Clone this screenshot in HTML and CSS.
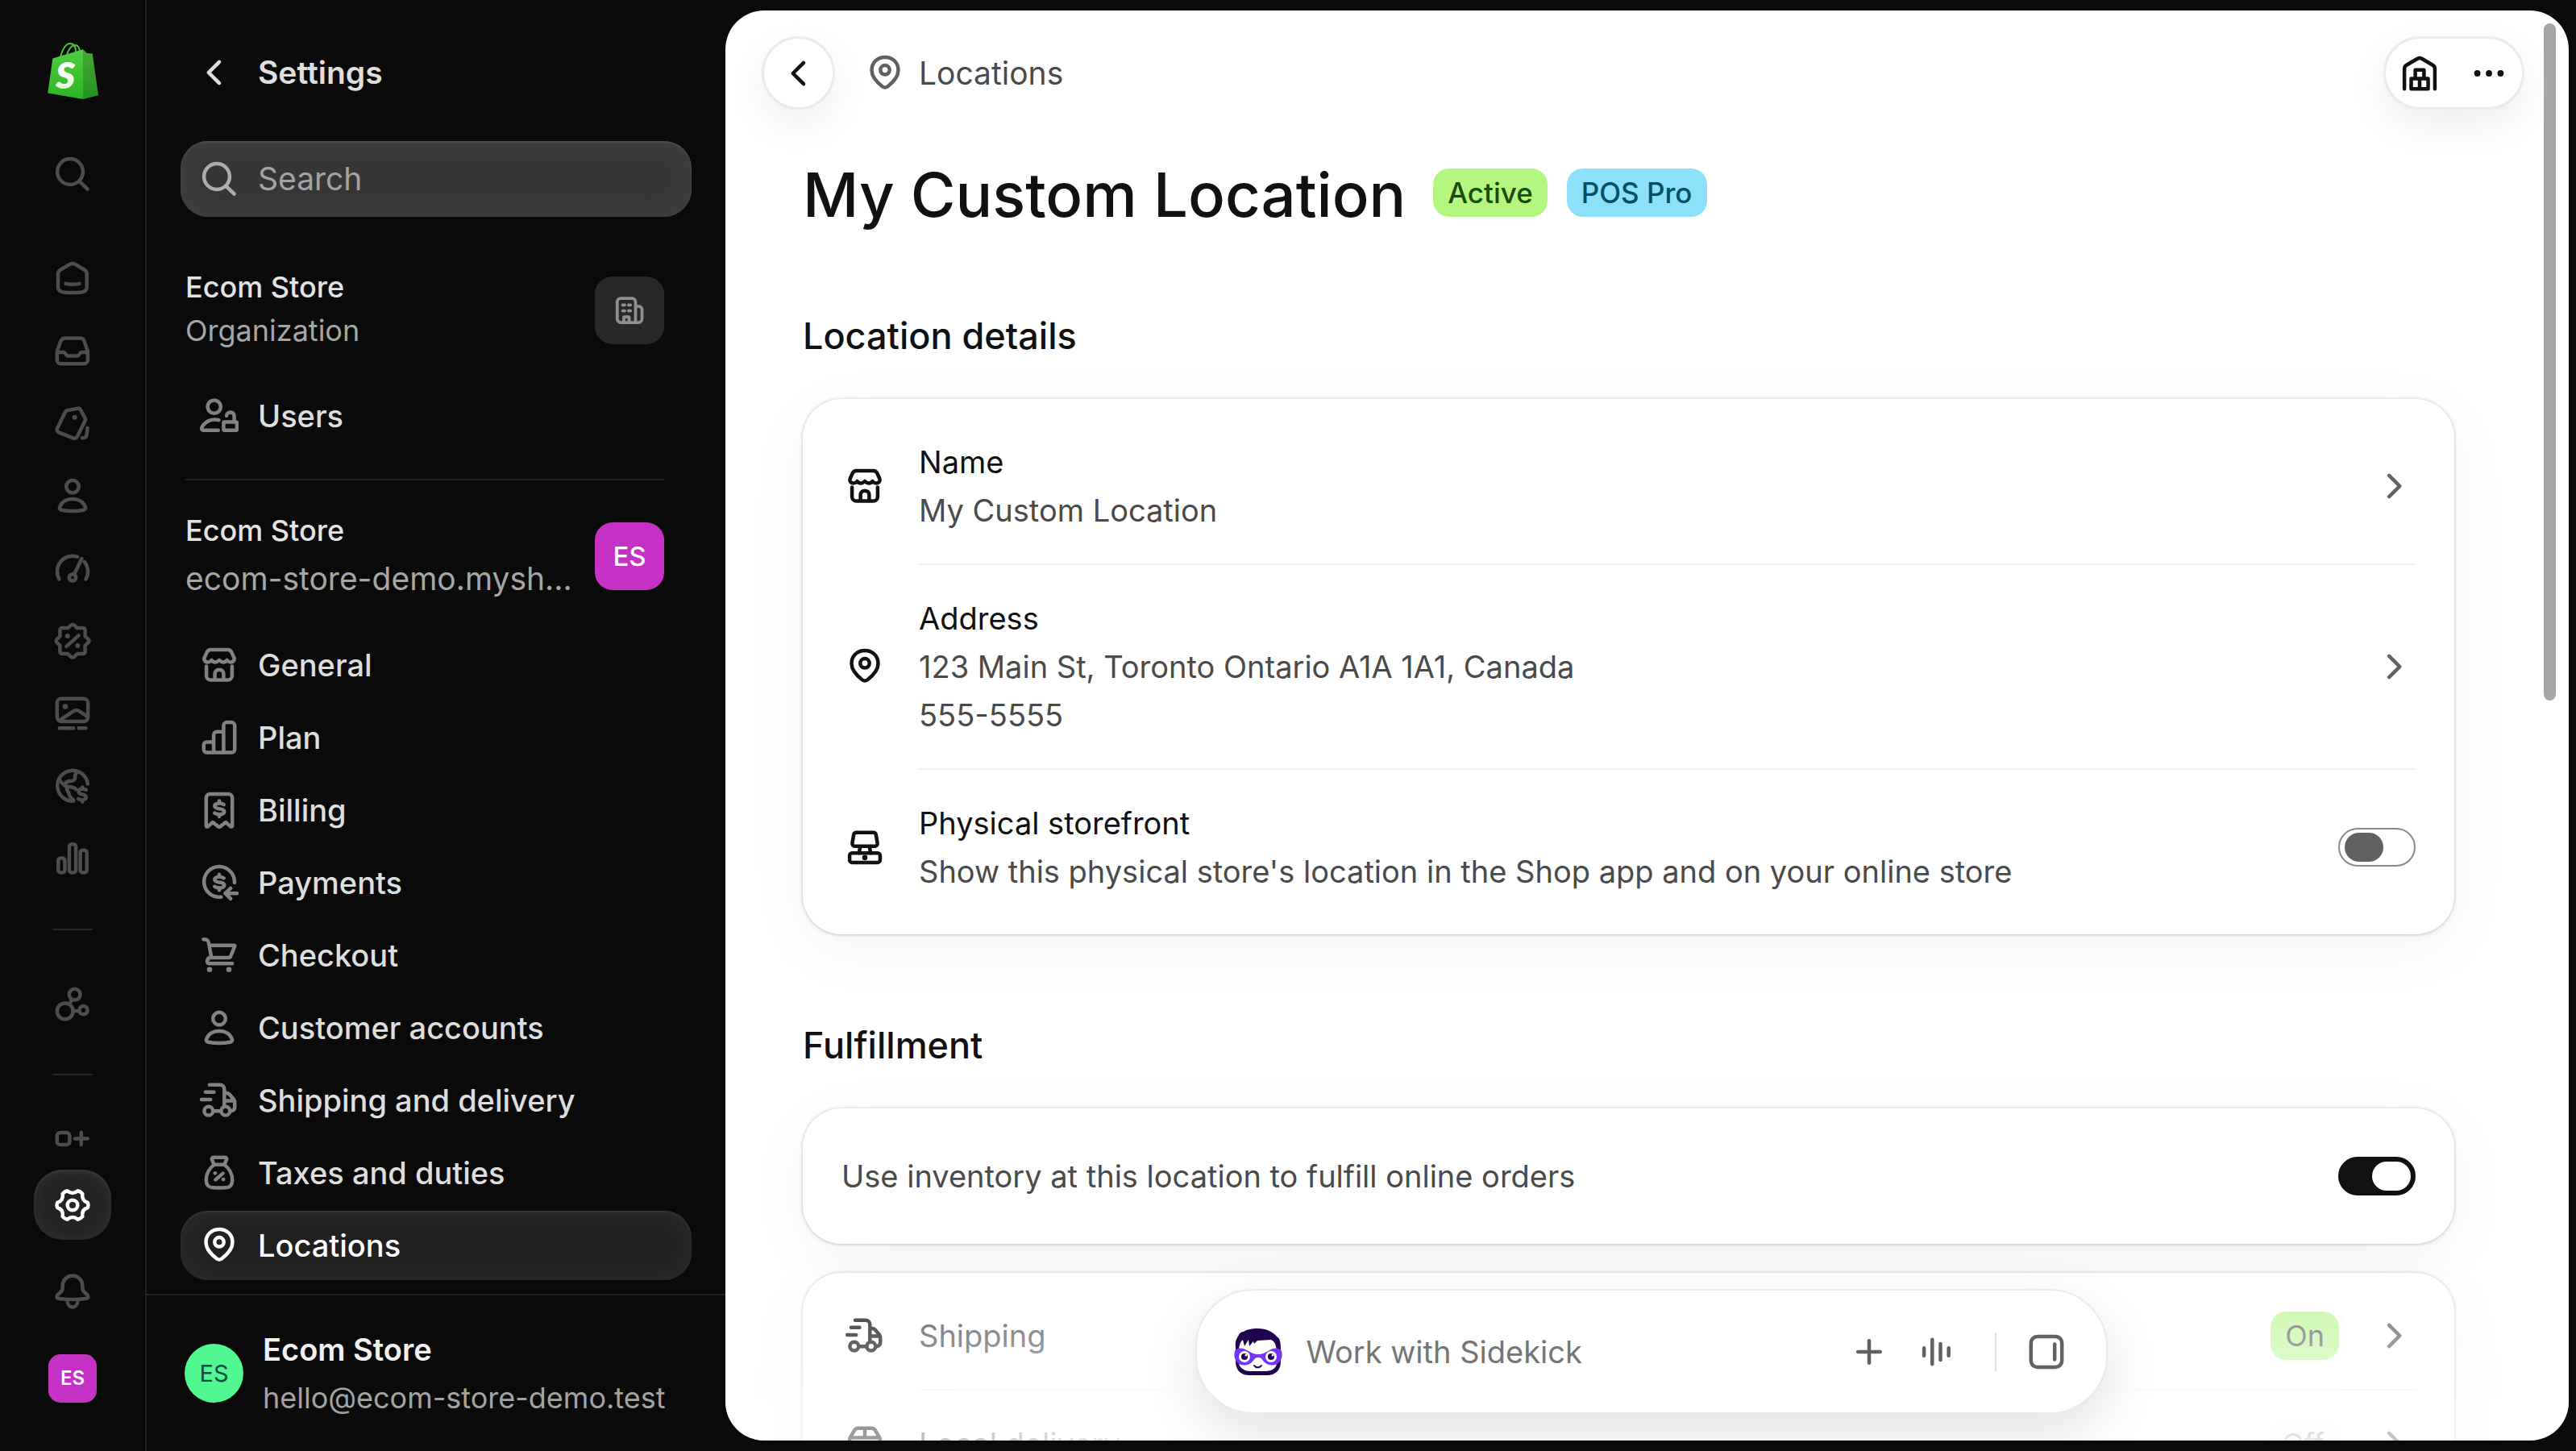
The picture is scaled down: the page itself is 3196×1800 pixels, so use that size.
FILE: index.html
```html
<!DOCTYPE html>
<html lang="en">
<head>
<meta charset="utf-8">
<title>Locations · Settings</title>
<link rel="stylesheet" href="styles.css">
</head>
<body>
<svg class="sprite" aria-hidden="true">
  <symbol id="i-search" viewBox="0 0 16 16"><circle cx="7" cy="7" r="5.3"/><path d="M11 11.1l3.2 3.1"/></symbol>
  <symbol id="i-home" viewBox="0 0 16 16"><path d="M2 6.4c0-.8.4-1.5 1.1-1.9l3.8-2.2c.7-.4 1.5-.4 2.2 0l3.7 2.2c.7.4 1.1 1.1 1.1 1.9v5.2c0 1.2-.8 2-2 2.2-2.6.3-5.3.3-7.9 0-1.2-.2-2-1-2-2.2z"/><path d="M5.2 10.3c1.9.4 3.7.4 5.6 0"/></symbol>
  <symbol id="i-inbox" viewBox="0 0 16 16"><path d="M4.8 2.8h6.4c.7 0 1.3.4 1.5 1l1.4 3.9c.2.5.2.8.2 1.2v2.9c0 .9-.7 1.6-1.6 1.6H3.2c-.9 0-1.6-.7-1.6-1.6V8.900c0-.4 0-.7.2-1.200l1.400-3.900c.3-.6.9-1 1.600-1z"/><path d="M1.700 8.700h2.600c.9 0 .8 1.500 1.800 1.500h3.800c1 0 .9-1.500 1.800-1.500h2.600"/></symbol>
  <symbol id="i-tag" viewBox="0 0 16 16"><path d="M5.800 2.700l4.100-.8c.7-.1 1.200.1 1.500.7l1.700 3.100c.3.500.3 1 0 1.500l-3.100 6.200c-.4.800-1 1-1.800.7l-5.700-2.200c-.9-.4-1.200-1.100-.7-2l3.100-6.400c.2-.4.500-.7.900-.8z"/><circle class="dot" cx="8.900" cy="5.600" r="1"/><path d="M14.200 10l-.3 2.500c-.1 1-.7 1.600-1.600 1.600H12"/></symbol>
  <symbol id="i-person" viewBox="0 0 16 16"><circle cx="8" cy="4.200" r="2.600"/><path d="M2.700 12.700C3.400 10.600 5.400 9.300 8 9.300s4.600 1.300 5.300 3.400c.2.600-.1 1.100-.7 1.200-3 .6-6.200.6-9.200 0-.6-.1-.9-.6-.7-1.200z"/></symbol>
  <symbol id="i-gauge" viewBox="0 0 16 16"><path d="M2.500 12.500A6.400 6.400 0 0 1 10 3.200M12.900 5.300a6.400 6.400 0 0 1 .6 7.200M8.700 10.500L11.800 4"/><circle cx="8" cy="11.800" r="1.400"/></symbol>
  <symbol id="i-discount" viewBox="0 0 16 16"><path d="M7.200 1.600c.5-.4 1.100-.4 1.600 0l1.100 1.100h2.300c.6 0 1 .4 1 1v2.400l1.200 1.100c.5.500.5 1.100 0 1.600l-1.200 1.100v2.400c0 .6-.4 1-1 1H9.900l-1.100 1.200c-.5.4-1.100.4-1.600 0l-1.100-1.200H3.800c-.6 0-1-.4-1-1V9.900L1.600 8.800c-.5-.5-.5-1.100 0-1.600l1.200-1.100V3.700c0-.6.4-1 1-1h2.300z"/><path d="M5.500 10.300l5-4.500"/><circle class="dot" cx="5.900" cy="6" r="1"/><circle class="dot" cx="10.100" cy="10" r="1"/></symbol>
  <symbol id="i-image" viewBox="0 0 16 16"><rect x="1.600" y="1.900" width="12.800" height="9.400" rx="1.800"/><path d="M2.800 10.800l5.500-3.700c.9-.6 1.700-.6 2.600 0l3.300 2.300M2.600 14.100h5.800M10.600 14.100h2.900"/><circle class="dot" cx="5" cy="5.200" r="1.100"/></symbol>
  <symbol id="i-globe" viewBox="0 0 16 16"><path d="M8.400 14.200A6.300 6.300 0 1 1 14.300 7.200M2.200 5.200l2.600 2.700c.1-1.500 1-2 2.600-2 1.100 0 1.700-.5 1.600-1.400-.1-1 .1-1.600.9-2.200M4.800 7.900c1.700.8 4 .3 4.600 1.500M5.600 8.600c-.2 1.200.8 1.600.9 2.700.1.900.9 1.700 1.900 2.600"/><path d="M13.600 9.600c-1.400-.8-3.200-.4-3.100.8.1 1.500 3.100.7 3.100 2.200 0 1.200-1.900 1.500-3.200.7M12.100 8.500v.8M12.100 13.800v.8"/></symbol>
  <symbol id="i-bars" viewBox="0 0 16 16"><rect x="2.100" y="7.800" width="2.700" height="6" rx="1"/><rect x="6.650" y="2.100" width="2.700" height="11.700" rx="1"/><rect x="11.200" y="4.600" width="2.700" height="9.200" rx="1"/></symbol>
  <symbol id="i-apps" viewBox="0 0 16 16"><circle cx="4.900" cy="10.800" r="3.300"/><circle cx="8.900" cy="3.900" r="2.300"/><circle cx="12.500" cy="10.400" r="1.700"/><path d="M6.700 7.900l1-1.900M8.300 10.700h2.400"/></symbol>
  <symbol id="i-gridplus" viewBox="0 0 16 16"><rect x="1.600" y="1.700" width="5.200" height="5" rx="1.300"/><rect x="1.600" y="9.500" width="5.200" height="5" rx="1.300"/><rect x="9.200" y="9.500" width="5.200" height="5" rx="1.300"/><path d="M9 4.200h5.200M11.600 1.700v5"/></symbol>
  <symbol id="i-gear" viewBox="0 0 16 16"><path d="M14.300 7Q14.700 8 14.300 9Q11.700 9.800 12.100 12.700Q11.300 13.700 10.200 13.900Q8 12.100 5.800 13.900Q4.700 13.700 3.900 12.700Q4.300 9.800 1.700 9Q1.300 8 1.700 7Q4.300 6.200 3.900 3.300Q4.700 2.300 5.800 2.100Q8 3.900 10.200 2.100Q11.300 2.300 12.100 3.300Q11.700 6.200 14.300 7z"/><circle cx="8" cy="8" r="2.100"/></symbol>
  <symbol id="i-bell" viewBox="0 0 16 16"><path d="M8 1.500a4.100 4.100 0 0 0-4.100 4.100v.9c0 1-.5 1.700-1.300 2.300C1.300 9.700 1.200 10.900 2.400 11c3.700.4 7.500.4 11.200 0 1.200-.1 1.100-1.300-.2-2.200-.8-.6-1.300-1.300-1.300-2.300v-.9A4.100 4.100 0 0 0 8 1.500z"/><path d="M5.800 11.600c0 3.900 4.400 3.900 4.400 0"/></symbol>
  <symbol id="i-back" viewBox="0 0 16 16"><path d="M10 3.600L5.600 8l4.400 4.400"/></symbol>
  <symbol id="i-next" viewBox="0 0 16 16"><path d="M5.700 3.600L10.100 8l-4.400 4.400"/></symbol>
  <symbol id="i-users" viewBox="0 0 16 16"><circle cx="5.900" cy="4.200" r="2.700"/><path d="M7.800 9.700C4.800 9 2 10.300.8 12.800c-.3.600.1 1.100.7 1.100h6.100"/><rect x="9.800" y="10.500" width="5.500" height="3.400" rx=".3"/><path d="M14.200 10.300V8.100c0-2.100-3-2.100-3.200-.2"/></symbol>
  <symbol id="i-store" viewBox="0 0 16 16"><path d="M4.500 1.700h7c.7 0 1.300.4 1.600 1l1 2.200c.4 1-.3 1.900-1.300 1.900-.8 0-1.300-.4-1.600-.8-.4.500-.9.800-1.600.800S8.500 6.500 8 6c-.5.500-.9.800-1.600.800S5.200 6.500 4.800 6c-.3.400-.8.800-1.600.8-1 0-1.700-.9-1.300-1.900l1-2.200c.3-.6.900-1 1.600-1zM2.700 8.500v3.900c0 1 .8 1.800 1.800 1.800h7c1 0 1.800-.8 1.800-1.800V8.500M6.200 14v-2.300c0-2.400 3.600-2.400 3.600 0V14"/></symbol>
  <symbol id="i-plan" viewBox="0 0 16 16"><path d="M9.800 14.200V3c0-.7.600-1.300 1.300-1.300h2c.7 0 1.300.6 1.300 1.300v9.900c0 .7-.6 1.300-1.300 1.300H2.900c-.7 0-1.300-.6-1.300-1.300V11c0-.7.600-1.200 1.300-1.200h2.700M5.700 14.200V6.900c0-.7.600-1.300 1.300-1.300h2.700"/></symbol>
  <symbol id="i-bill" viewBox="0 0 16 16"><path d="M2.600 14.400V2.900c0-.9.700-1.600 1.600-1.600h7.600c.9 0 1.600.7 1.600 1.600v11.500c0 .5-.4.600-.8.300l-1.900-1.700-2 1.600c-.4.400-1 .4-1.400 0l-2-1.600-1.900 1.700c-.4.300-.8.200-.8-.3z"/><path d="M9.900 5.700c-1.400-.9-3.900-.6-3.800.7.100 1.500 4 .6 4 2.200 0 1.300-2.600 1.500-4 .6M8 4.200v1M8 9.700v1"/></symbol>
  <symbol id="i-pay" viewBox="0 0 16 16"><path d="M8.800 13.900A6.300 6.300 0 1 1 14.300 8M15.300 12.400h-4.600M12.700 10.300l-2.200 2.100 2.200 2.200"/><path d="M9.900 6.100c-1.400-.9-3.900-.6-3.800.7.100 1.500 4 .6 4 2.200 0 1.300-2.600 1.500-4 .6M8 4.600v1M8 10.100v1"/></symbol>
  <symbol id="i-cart" viewBox="0 0 16 16"><path d="M1.500 1.400c1.400 0 1.900.3 2.100 1.300L4.800 9M3.900 3.900h10.300c.2 0 .3.200.2.400L12.700 8.500c-.1.300-.4.500-.8.500H4.300c-1.300 0-1.800 2.400-.6 2.400h9.700"/><circle class="dot" cx="4" cy="13.900" r="1.100"/><circle class="dot" cx="12" cy="13.900" r="1.100"/></symbol>
  <symbol id="i-truck" viewBox="0 0 16 16"><path d="M4 1.600h4.300c1 0 1.800.8 1.800 1.800v7.200M2.300 4.600h3.500M.7 7.700h3.700M5.500 12.400h3M10.200 5h.9c.5 0 .9.200 1.200.6l1.700 2c.3.400.4.700.4 1.100v2.200c0 .8-.6 1.400-1.600 1.500M10.200 8.200h3.900"/><circle cx="3.600" cy="12.400" r="1.800"/><circle cx="10.600" cy="12.400" r="1.800"/></symbol>
  <symbol id="i-bag" viewBox="0 0 16 16"><path d="M5.900 4.600L5 2.500c-.2-.5.100-.9.600-.9h4.800c.5 0 .8.400.6.900l-.9 2.100M5.900 4.600h4.200c2 1.500 3.300 4 3.300 6.300 0 2.300-1 3.100-2.900 3.200-1.700.1-3.300.1-5 0-1.900-.1-2.900-.9-2.900-3.200 0-2.300 1.300-4.800 3.300-6.300zM6.500 10.800l3-2.600"/><circle class="dot" cx="6.300" cy="8.100" r=".8"/><circle class="dot" cx="9.700" cy="10.700" r=".8"/></symbol>
  <symbol id="i-pin" viewBox="0 0 16 16"><path d="M8 1.300c-3.200 0-5.500 2.300-5.500 5.400 0 3.200 2.500 5.300 4.500 6.800.6.400 1.400.4 2 0 2-1.500 4.500-3.600 4.500-6.800C13.500 3.600 11.200 1.300 8 1.300z"/><circle cx="8" cy="6.600" r="1.900"/></symbol>
  <symbol id="i-org" viewBox="0 0 16 16"><path d="M1.900 12.200V3.800c0-1 .8-1.800 1.800-1.800h5.500c1 0 1.800.8 1.800 1.800V14H3.700c-1 0-1.800-.8-1.800-1.800zM11 5.900h1.400c1 0 1.800.8 1.800 1.800v4.500c0 1-.8 1.800-1.800 1.800H11M5.200 14v-2.800h2.600V14M4.600 5.300h1M7.500 5.300h1M4.600 8.200h1M7.500 8.200h1"/></symbol>
  <symbol id="i-warehouse" viewBox="0 0 16 16"><path d="M1.700 14.400V6.100c0-.7.400-1.300 1-1.600l4.400-2.600c.6-.3 1.200-.3 1.800 0l4.400 2.600c.6.300 1 .9 1 1.600v8.300M4.500 10.200h3.500v4.200H4.500zM8 10.200h3.500v4.200H8zM6.200 6.600h3.600v3.600H6.200z"/></symbol>
  <symbol id="i-more" viewBox="0 0 16 16"><circle class="dot" cx="3.200" cy="8" r="1.300"/><circle class="dot" cx="8" cy="8" r="1.300"/><circle class="dot" cx="12.800" cy="8" r="1.300"/></symbol>
  <symbol id="i-register" viewBox="0 0 16 16"><path d="M4.500 1.900h7c.6 0 1 .4 1.100.9l.6 3.500c.1.700-.4 1.300-1.100 1.300H3.900c-.7 0-1.200-.6-1.100-1.300l.6-3.500c.1-.5.500-.9 1.100-.9zM6.100 7.800l-.5 2.600M9.900 7.800l.5 2.600"/><rect x="1.700" y="10.400" width="12.600" height="3.900" rx="1"/><circle class="dot" cx="8" cy="12.300" r="1.100"/></symbol>
  <symbol id="i-box" viewBox="0 0 16 16"><path d="M1.700 13V6.500c0-.4.100-.8.300-1.200l1.800-3c.3-.4.700-.7 1.200-.7h6c.5 0 .9.300 1.200.7l1.800 3c.2.400.3.800.3 1.200V13c0 .8-.6 1.400-1.400 1.400H3.100c-.8 0-1.400-.6-1.400-1.400zM2 5.500h12M8 1.600v4"/></symbol>
  <symbol id="i-plus" viewBox="0 0 16 16"><path d="M8 3.400v9.200M3.400 8h9.200"/></symbol>
  <symbol id="i-wave" viewBox="0 0 16 16"><path d="M2.700 6.400v3.200M6.100 2.900v10.200M9.500 4.700v6.600M12.900 6.400v3.200"/></symbol>
  <symbol id="i-panel" viewBox="0 0 16 16"><rect x="1.600" y="1.700" width="12.800" height="12.600" rx="2.600"/><path d="M11.400 4.800v6.400"/></symbol>
</svg>

<div class="app">
  <nav class="rail" aria-label="Main">
    <a class="logo" href="#" aria-label="Shopify home">
      <svg viewBox="0 0 63 70" width="63" height="70">
        <defs><linearGradient id="g1" x1="0" y1="0" x2="0" y2="1"><stop offset="0" stop-color="#50cf40"/><stop offset="1" stop-color="#2eb325"/></linearGradient>
        <linearGradient id="g2" x1="0" y1="0" x2="0" y2="1"><stop offset="0" stop-color="#45a836"/><stop offset="1" stop-color="#259220"/></linearGradient>
        <linearGradient id="g3" x1="0" y1="0" x2="0" y2="1"><stop offset=".4" stop-color="#fff"/><stop offset="1" stop-color="#d3f0c0"/></linearGradient></defs>
        <path d="M16 18C18 8 23 1 28 1s7 5 7 11M24 16c1-7 6-13 10-13s5 3 6 7" fill="none" stroke="#4dc63d" stroke-width="2"/>
        <path d="M6.300 19.400L44 8.300V70L.3 62.500z" fill="url(#g1)"/><path d="M44 8.300l5 4.700 6.700.4L63 65.200 44 70z" fill="url(#g2)"/>
        <text class="logo-letter" x="10" y="57" fill="url(#g3)">S</text>
      </svg>
    </a>
    <button class="rail-item rail-search" aria-label="Search"><svg class="icon"><use href="#i-search"/></svg></button>
    <div class="rail-list">
      <a class="rail-item" href="#" aria-label="Home"><svg class="icon"><use href="#i-home"/></svg></a>
      <a class="rail-item" href="#" aria-label="Orders"><svg class="icon"><use href="#i-inbox"/></svg></a>
      <a class="rail-item" href="#" aria-label="Products"><svg class="icon"><use href="#i-tag"/></svg></a>
      <a class="rail-item" href="#" aria-label="Customers"><svg class="icon"><use href="#i-person"/></svg></a>
      <a class="rail-item" href="#" aria-label="Growth"><svg class="icon"><use href="#i-gauge"/></svg></a>
      <a class="rail-item" href="#" aria-label="Discounts"><svg class="icon"><use href="#i-discount"/></svg></a>
      <a class="rail-item" href="#" aria-label="Content"><svg class="icon"><use href="#i-image"/></svg></a>
      <a class="rail-item" href="#" aria-label="Markets"><svg class="icon"><use href="#i-globe"/></svg></a>
      <a class="rail-item" href="#" aria-label="Analytics"><svg class="icon"><use href="#i-bars"/></svg></a>
      <hr class="rail-rule">
      <a class="rail-item" href="#" aria-label="Sales channels"><svg class="icon"><use href="#i-apps"/></svg></a>
      <hr class="rail-rule">
      <a class="rail-item" href="#" aria-label="Apps"><svg class="icon"><use href="#i-gridplus"/></svg></a>
    </div>
    <div class="rail-foot">
      <a class="rail-item rail-current" href="#" aria-label="Settings"><svg class="icon"><use href="#i-gear"/></svg></a>
      <button class="rail-item rail-bell" aria-label="Notifications"><svg class="icon"><use href="#i-bell"/></svg></button>
      <button class="tile tile-small" aria-label="Account">ES</button>
    </div>
  </nav>

  <aside class="settings">
    <div class="settings-scroll">
      <header class="settings-head"><a href="#" aria-label="Back"><svg class="icon"><use href="#i-back"/></svg></a><h2>Settings</h2></header>
      <label class="search"><svg class="icon"><use href="#i-search"/></svg><input type="search" placeholder="Search" aria-label="Search"></label>
      <div class="entity">
        <div class="entity-text"><strong>Ecom Store</strong><span>Organization</span></div>
        <button class="tile tile-org" aria-label="Organization"><svg class="icon icon-org"><use href="#i-org"/></svg></button>
      </div>
      <a class="nav-item" href="#"><svg class="icon"><use href="#i-users"/></svg>Users</a>
      <hr class="settings-rule">
      <div class="entity entity-store">
        <div class="entity-text"><strong>Ecom Store</strong><span class="domain">ecom-store-demo.mysh...</span></div>
        <span class="tile">ES</span>
      </div>
      <nav class="nav" aria-label="Settings">
        <a class="nav-item" href="#"><svg class="icon"><use href="#i-store"/></svg>General</a>
        <a class="nav-item" href="#"><svg class="icon"><use href="#i-plan"/></svg>Plan</a>
        <a class="nav-item" href="#"><svg class="icon"><use href="#i-bill"/></svg>Billing</a>
        <a class="nav-item" href="#"><svg class="icon"><use href="#i-pay"/></svg>Payments</a>
        <a class="nav-item" href="#"><svg class="icon"><use href="#i-cart"/></svg>Checkout</a>
        <a class="nav-item" href="#"><svg class="icon"><use href="#i-person"/></svg>Customer accounts</a>
        <a class="nav-item" href="#"><svg class="icon"><use href="#i-truck"/></svg>Shipping and delivery</a>
        <a class="nav-item" href="#"><svg class="icon"><use href="#i-bag"/></svg>Taxes and duties</a>
        <a class="nav-item nav-current" href="#" aria-current="page"><svg class="icon"><use href="#i-pin"/></svg>Locations</a>
      </nav>
    </div>
    <a class="account" href="#">
      <span class="avatar">ES</span>
      <span class="account-text"><strong>Ecom Store</strong><span>hello@ecom-store-demo.test</span></span>
    </a>
  </aside>

  <main class="page">
    <header class="topbar">
      <button class="round" aria-label="Back"><svg class="icon"><use href="#i-back"/></svg></button>
      <a class="crumb" href="#"><svg class="icon"><use href="#i-pin"/></svg>Locations</a>
      <div class="actions">
        <button aria-label="Change location"><svg class="icon"><use href="#i-warehouse"/></svg></button>
        <button aria-label="More actions"><svg class="icon"><use href="#i-more"/></svg></button>
      </div>
    </header>
    <div class="content">
      <div class="title-row">
        <h1>My Custom Location</h1>
        <span class="badge badge-green">Active</span>
        <span class="badge badge-blue">POS Pro</span>
      </div>

      <section>
        <h2 class="section-title">Location details</h2>
        <div class="card">
          <a class="row" href="#">
            <svg class="icon lead"><use href="#i-store"/></svg>
            <span class="row-body"><span class="row-title">Name</span><span>My Custom Location</span></span>
            <svg class="icon chevron"><use href="#i-next"/></svg>
          </a>
          <hr class="row-rule">
          <a class="row" href="#">
            <svg class="icon lead"><use href="#i-pin"/></svg>
            <span class="row-body"><span class="row-title">Address</span><span>123 Main St, Toronto Ontario A1A 1A1, Canada</span><span>555-5555</span></span>
            <svg class="icon chevron"><use href="#i-next"/></svg>
          </a>
          <hr class="row-rule">
          <label class="row">
            <svg class="icon lead"><use href="#i-register"/></svg>
            <span class="row-body"><span class="row-title">Physical storefront</span><span>Show this physical store's location in the Shop app and on your online store</span></span>
            <input class="switch" type="checkbox" role="switch">
          </label>
        </div>
      </section>

      <section>
        <h2 class="section-title">Fulfillment</h2>
        <div class="card">
          <label class="row row-single"><span class="row-body">Use inventory at this location to fulfill online orders</span><input class="switch" type="checkbox" role="switch" checked></label>
        </div>
        <div class="card">
          <a class="row" href="#">
            <svg class="icon lead"><use href="#i-truck"/></svg>
            <span class="row-body">Shipping</span>
            <span class="badge badge-green badge-on">On</span>
            <svg class="icon chevron"><use href="#i-next"/></svg>
          </a>
          <hr class="row-rule">
          <a class="row" href="#">
            <svg class="icon lead"><use href="#i-box"/></svg>
            <span class="row-body">Local delivery</span>
            <span class="badge badge-off">Off</span>
            <svg class="icon chevron"><use href="#i-next"/></svg>
          </a>
        </div>
      </section>
    </div>

    <div class="fade"></div>
    <div class="fade fade-center"></div>
    <div class="sidekick-dock">
      <form class="sidekick">
        <svg class="face" viewBox="0 0 60 58" width="60" height="58">
          <path d="M2 24C1 14 4 12 6 8c1-2 3-4 6-4C16 1 23 0 29 0c11 0 19 4 24 10 4 2 5 7 5 16v15c0 11-7 17-17 17H19C9 58 2 52 2 41z" fill="#1f0250"/>
          <path d="M6 27c0-4 1-8 3-11l2-2 2 8 5-8 1 8 5-6 1 3 4-4 17-1c5 2 6 7 7 13v16c0 6-6 10-14 10H20C12 53 6 48 6 42z" fill="#fff"/>
          <path d="M1 28c2-4 9-5 15-1 5 3 9 5 14 5s9-2 14-5c6-4 13-3 15 1 1 4 1 9-2 13-4 6-15 6-20 0-3-4-4-5-7-5s-4 1-7 5c-5 6-16 6-20 0-3-4-3-9-2-13z" fill="#7434fa"/>
          <circle cx="13" cy="35" r="7" fill="#fff"/><circle cx="46" cy="35" r="7" fill="#fff"/>
          <circle cx="13" cy="35" r="4" fill="#1f0250"/><circle cx="46" cy="35" r="4" fill="#1f0250"/><circle cx="15" cy="33" r="1.500" fill="#fff"/><circle cx="48" cy="33" r="1.500" fill="#fff"/>
          <path d="M25 46c2 3 7 3 9 0" fill="none" stroke="#1f0250" stroke-width="2" stroke-linecap="round"/>
        </svg>
        <input type="text" placeholder="Work with Sidekick" aria-label="Work with Sidekick">
        <button type="button" aria-label="Add"><svg class="icon"><use href="#i-plus"/></svg></button>
        <button type="button" aria-label="Voice"><svg class="icon"><use href="#i-wave"/></svg></button>
        <span class="sidekick-rule"></span>
        <button type="button" aria-label="Open panel"><svg class="icon"><use href="#i-panel"/></svg></button>
      </form>
    </div>
    <div class="scroll-thumb"></div>
  </main>
</div>
</body>
</html>
```
FILE: styles.css
```css
*, *::before, *::after { box-sizing: border-box; }

body {
  margin: 0;
  background: #0a0a0a;
  color: #dedede;
  font-family: Inter, "Liberation Sans", sans-serif;
  font-size: 38px;
  font-weight: 400;
  line-height: 60px;
}

h1, h2, hr { margin: 0; }
hr { border: 0; flex: none; }
a { color: inherit; text-decoration: none; }
button { margin: 0; padding: 0; border: 0; background: none; color: inherit; font: inherit; cursor: pointer; }
input { font: inherit; }

.sprite { position: absolute; width: 0; height: 0; }
.icon {
  width: 48px;
  height: 48px;
  flex: none;
  display: block;
  fill: none;
  stroke: currentColor;
  stroke-width: 1.5px;
  stroke-linecap: round;
  stroke-linejoin: round;
}
.dot { fill: currentColor; stroke: none; }

.app { display: flex; height: 100vh; overflow: hidden; }

/* Icon rail */
.rail {
  flex: none;
  width: 182px;
  display: flex;
  flex-direction: column;
  align-items: center;
  padding: 53px 0 60px;
  border-right: 2px solid #212121;
  color: #4d4d4d;
}
.logo { display: block; height: 70px; }
.logo svg { display: block; }
.logo-letter { font: italic 800 46px Lato, "Open Sans", sans-serif; }
.rail-item { display: flex; flex: none; align-items: center; justify-content: center; width: 96px; height: 90px; }
.rail-search { margin: 48px 0 39px; }
.rail-list { flex: 1; min-height: 0; overflow: hidden; display: flex; flex-direction: column; align-items: center; }
.rail-rule { width: 50px; height: 2px; margin: 42px 0 47px; background: #262626; }
.rail-rule ~ .rail-rule { margin: 41px 0 45px; }
.rail-foot { display: flex; flex-direction: column; align-items: center; padding-top: 25px; }
.rail-current {
  height: 87px;
  border-radius: 36px;
  background: #232323;
  color: #fff;
  box-shadow: inset 0 0 24px #323232, inset 0 3px 3px #3a3a3a;
}
.rail-bell { margin: 19px 0 33px; }

.tile {
  display: flex;
  flex: none;
  align-items: center;
  justify-content: center;
  width: 86px;
  height: 84px;
  border-radius: 22px;
  background: #c530c5;
  color: #fff;
  font-size: 33px;
  font-weight: 500;
}
.tile-small { width: 60px; height: 60px; border-radius: 15px; font-size: 24px; font-weight: 600; }
.tile-org { background: #282828; color: #8f8f8f; }
.icon-org { width: 40px; height: 40px; }

/* Settings navigation */
.settings { flex: none; width: 718px; display: flex; flex-direction: column; }
.settings-scroll { flex: 1; min-height: 0; overflow: hidden; padding: 60px 42px 0; }
.settings-head { display: flex; align-items: center; gap: 30px; height: 60px; padding-left: 18px; }
.settings-head h2 { font-size: 39px; line-height: 60px; font-weight: 600; }
.search {
  display: flex;
  align-items: center;
  gap: 24px;
  height: 94px;
  margin-top: 55px;
  padding: 0 24px;
  border-radius: 34px;
  background: #363636;
  color: #acacac;
  box-shadow: inset 0 0 36px #434343, inset 0 2px 2px #545454;
}
.search input { flex: 1; min-width: 0; padding: 0; border: 0; outline: 0; background: none; color: #fff; font-size: 39px; }
.search input::placeholder { color: #a3a3a3; opacity: 1; }
.entity { display: flex; align-items: center; gap: 24px; margin-top: 60px; padding: 0 34px 0 6px; font-size: 36px; line-height: 54px; }
.entity-text { flex: 1; min-width: 0; display: flex; flex-direction: column; margin-bottom: 4px; color: #a6a6a6; white-space: nowrap; }
.entity-text strong { color: #e3e3e3; font-weight: 500; }
.entity-store { margin-top: 32px; line-height: 60px; }
.domain { font-size: 39px; }
.nav-item {
  display: flex;
  align-items: center;
  gap: 24px;
  height: 86px;
  padding: 0 24px;
  border-radius: 34px;
  color: #dedede;
  font-weight: 500;
}
.nav-item .icon { color: #828282; }
.entity + .nav-item { margin-top: 32px; }
.settings-rule { height: 2px; margin: 35px 34px 0 6px; background: #212121; }
.nav { display: flex; flex-direction: column; gap: 4px; margin-top: 30px; }
.nav-current { background: #212121; color: #fff; box-shadow: inset 0 0 36px #2e2e2e, inset 0 2px 2px #3a3a3a; }
.nav-current .icon { color: #fff; }
.account { flex: none; display: flex; align-items: center; gap: 24px; height: 195px; padding-left: 47px; border-top: 2px solid #212121; }
.avatar {
  display: flex;
  flex: none;
  align-items: center;
  justify-content: center;
  width: 73px;
  height: 73px;
  border-radius: 50%;
  background: #51f78f;
  color: #0a4d47;
  font-size: 29px;
}
.account-text { display: flex; flex-direction: column; color: #a3a3a3; font-size: 36px; }
.account-text strong { color: #f0f0f0; font-size: 38px; font-weight: 600; }

/* Page */
.page {
  position: relative;
  flex: 1;
  min-width: 0;
  margin: 13px 9px 13px 0;
  border-radius: 48px;
  background: #fff;
  color: #4a4a4a;
  overflow: hidden;
}
.topbar { display: flex; align-items: center; padding: 32px 55px 0 45px; }
.round, .actions { height: 91px; border: 3px solid #ebebeb; border-radius: 46px; background: #fff; color: #111; box-shadow: 0 18px 54px rgba(0, 0, 0, .08); }
.round { display: flex; align-items: center; justify-content: center; width: 91px; }
.crumb { display: flex; align-items: center; gap: 18px; margin-left: 38px; font-size: 39px; }
.crumb .icon { color: #616161; }
.actions { display: flex; align-items: center; gap: 38px; margin-left: auto; padding: 0 17px 0 18px; }

.content { padding: 57px 142px 0 96px; }
.title-row { display: flex; align-items: center; gap: 24px; }
.title-row h1 { margin-right: 10px; color: #111; font-size: 76px; line-height: 96px; font-weight: 500; }
.badge { flex: none; height: 60px; padding: 0 18px; border-radius: 20px; font-size: 35px; line-height: 60px; font-weight: 500; }
.title-row .badge { margin-bottom: 4px; }
.badge-green { background: #b4f780; color: #1b4a0c; }
.badge-blue { background: #8de0f9; color: #00506a; }
.badge-on { background: #c0f89a; color: #616161; font-size: 36px; font-weight: 400; }
.badge-off { background: #fafafa; color: #9a9a9a; font-size: 36px; font-weight: 400; }

section { margin-top: 98px; }
section + section { margin-top: 108px; }
.section-title { margin-bottom: 48px; color: #111; font-size: 45px; line-height: 60px; font-weight: 500; }
.card {
  padding: 12px 48px;
  border-radius: 48px;
  background: #fff;
  box-shadow: 0 0 4px rgba(0, 0, 0, .2), 0 2px 4px rgba(0, 0, 0, .06), 0 18px 84px rgba(0, 0, 0, .05);
}
.card + .card { margin-top: 36px; }
.row { display: flex; align-items: center; padding: 36px 0; }
.row-body { flex: 1; display: flex; flex-direction: column; }
.row-title, .lead { color: #111; }
.lead { margin: 0 43px 0 5px; }
.chevron { margin: 0 2px 0 45px; color: #616161; }
.row-single { padding: 42px 0; }
.row-rule { height: 2px; margin-left: 96px; background: #f3f3f3; }

.switch {
  appearance: none;
  flex: none;
  display: flex;
  align-items: center;
  width: 96px;
  height: 48px;
  margin: 0;
  padding: 0 6px;
  border: 2px solid #8a8a8a;
  border-radius: 24px;
  background: #fff;
}
.switch::before { content: ""; width: 48px; height: 36px; border-radius: 18px; background: #616161; }
.switch:checked { justify-content: flex-end; padding: 0 4px; border-color: #111; background: #111; }
.switch:checked::before { background: #fff; }

/* Veil behind the assistant bar */
.fade {
  position: absolute;
  inset: auto 0 0;
  height: 230px;
  pointer-events: none;
  background: linear-gradient(rgba(255, 255, 255, 0), rgba(255, 255, 255, .28) 35%, rgba(255, 255, 255, .6));
}
.fade-center {
  left: 180px;
  right: 180px;
  height: 170px;
  background: linear-gradient(rgba(255, 255, 255, 0), rgba(255, 255, 255, .3) 40%, rgba(255, 255, 255, .8) 90%);
  -webkit-mask-image: linear-gradient(90deg, transparent, #000 20%, #000 80%, transparent);
  mask-image: linear-gradient(90deg, transparent, #000 20%, #000 80%, transparent);
}
.sidekick-dock { position: absolute; inset: auto 0 33px 10px; display: flex; justify-content: center; pointer-events: none; }
.sidekick {
  display: flex;
  align-items: center;
  width: 1132px;
  height: 155px;
  padding: 0 50px 0 46px;
  border: 2px solid #ebebeb;
  border-radius: 72px;
  background: #fff;
  color: #616161;
  box-shadow: 0 24px 72px rgba(0, 0, 0, .12);
  pointer-events: auto;
}
.sidekick input { flex: 1; min-width: 0; margin-left: 30px; padding: 0; border: 0; outline: 0; background: none; }
.sidekick input::placeholder { color: #757575; opacity: 1; }
.sidekick button + button { margin-left: 36px; }
.sidekick-rule { width: 2px; height: 48px; margin: 0 38px 0 48px; background: #e3e3e3; }

.scroll-thumb { position: absolute; top: 16px; right: 16px; width: 15px; height: 840px; border-radius: 8px; background: #a6a6a6; }
```
